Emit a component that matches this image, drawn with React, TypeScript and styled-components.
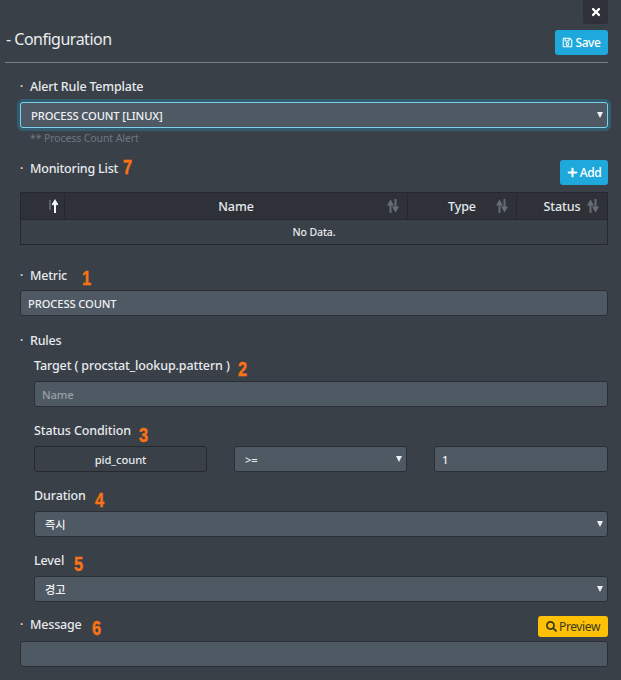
import React from "react";
import styled, { createGlobalStyle } from "styled-components";
import { FaRegSave, FaPlus, FaSearch, FaTimes } from "react-icons/fa";

const Global = createGlobalStyle`
  html, body { margin: 0; padding: 0; background: #3a4047; }
  body { font-family: "Noto Sans", "Noto Sans CJK KR", sans-serif; color: #e6eaee; }
  * { box-sizing: border-box; }
`;

const Page = styled.div`
  width: 621px;
  height: 680px;
  overflow: hidden;
  padding: 0 13px 0 5px;
  display: flex;
  flex-direction: column;
`;
const CloseRow = styled.div`
  display: flex;
  justify-content: flex-end;
  height: 24px;
`;
const CloseButton = styled.button`
  width: 25px;
  height: 24px;
  border: 0;
  padding: 0;
  border-radius: 0 0 3px 3px;
  background: #2e3238;
  color: #fff;
  font-size: 12px;
  display: flex;
  align-items: center;
  justify-content: center;
`;
const TitleRow = styled.div`
  display: flex;
  justify-content: space-between;
  align-items: flex-start;
  height: 39px;
  padding-top: 6px;
  padding-left: 1px;
  border-bottom: 1px solid #7a8088;
`;
const Title = styled.h1`
  margin: 0;
  font-size: 16px;
  font-weight: 400;
  line-height: 19px;
  letter-spacing: -0.5px;
  color: #e9edf0;
`;
const ActionButton = styled.button<{ $kind?: "info" | "warn" }>`
  border: 0;
  border-radius: 3px;
  height: ${(p) => (p.$kind === "warn" ? "21px" : "25px")};
  width: ${(p) => (p.$kind === "warn" ? "70px" : p.$kind === "info" ? "53px" : "48px")};
  padding: 0;
  background: ${(p) => (p.$kind === "warn" ? "#ffc107" : "#1fa8dc")};
  color: ${(p) => (p.$kind === "warn" ? "#3a3a1c" : "#fff")};
  font-family: inherit;
  font-size: 12px;
  font-weight: ${(p) => (p.$kind === "warn" ? 400 : 500)};
  letter-spacing: -0.4px;
  display: flex;
  align-items: center;
  justify-content: center;
  gap: 2px;
  svg { font-size: 11px; }
`;
const Body = styled.div`
  padding-left: 15px;
  display: flex;
  flex-direction: column;
`;
const Label = styled.div<{ $top: number; $sub?: boolean }>`
  margin-top: ${(p) => p.$top}px;
  margin-left: ${(p) => (p.$sub ? 14 : 0)}px;
  height: 16px;
  display: flex;
  align-items: center;
  font-size: 12.5px;
  font-weight: 500;
  letter-spacing: ${(p) => (p.$sub ? "-0.12px" : "-0.2px")};
  line-height: 16px;
  color: #e6eaee;
  white-space: nowrap;
`;
const Bullet = styled.span`
  width: 10px;
  font-size: 12px;
`;
const Num = styled.span<{ $gap: number; $dy: number }>`
  margin-left: ${(p) => p.$gap}px;
  color: #f97316;
  font-family: "Liberation Sans", sans-serif;
  font-size: 20px;
  font-weight: 700;
  letter-spacing: 0;
  -webkit-text-stroke: 0.4px #f97316;
  display: inline-block;
  transform: translateY(${(p) => p.$dy}px) scaleX(0.82);
  transform-origin: left center;
`;
const fieldCss = `
  display: block;
  height: 26px;
  width: 100%;
  border: 1px solid #2a2d33;
  border-radius: 3px;
  background: #4f5963;
  color: #eef1f3;
  font-family: inherit;
  font-size: 11.2px;
  font-weight: 500;
  letter-spacing: -0.12px;
  outline: none;
`;
const Input = styled.input<{ $top: number }>`
  ${fieldCss}
  margin-top: ${(p) => p.$top}px;
  padding: 0 7px;
  &::placeholder { color: #98a0a8; opacity: 1; }
`;
const SelectWrap = styled.div<{ $sub?: boolean; $top?: number }>`
  position: relative;
  margin-top: ${(p) => p.$top ?? 0}px;
  margin-left: ${(p) => (p.$sub ? 14 : 0)}px;
`;
const Select = styled.select<{ $focus?: boolean }>`
  ${fieldCss}
  appearance: none;
  padding: 0 10px;
  ${(p) => p.$focus && `
    border-color: #7fd0ea;
    box-shadow: 0 0 0 3px rgba(31, 168, 220, 0.28);
  `}
`;
const Arrow = styled.span`
  position: absolute;
  right: 5px;
  top: 10px;
  width: 0;
  height: 0;
  border-left: 3px solid transparent;
  border-right: 3px solid transparent;
  border-top: 6px solid #eef1f3;
`;
const Hint = styled.div`
  margin-top: 3px;
  margin-left: 10px;
  height: 15px;
  font-size: 10.5px;
  line-height: 15px;
  letter-spacing: -0.1px;
  color: #6d7680;
`;
const ListHead = styled.div`
  margin-top: 14px;
  height: 25px;
  display: flex;
  align-items: flex-start;
  justify-content: space-between;
`;
const Table = styled.div`
  margin-top: 7px;
  border: 1px solid #25282d;
  display: flex;
  flex-direction: column;
`;
const HeadRow = styled.div`
  display: grid;
  grid-template-columns: 44px 343px 109px 1fr;
  height: 27px;
  background: #2e3238;
  border-bottom: 1px solid #25282d;
`;
const HeadCell = styled.div<{ $last?: boolean }>`
  position: relative;
  display: flex;
  align-items: center;
  justify-content: center;
  font-size: 12.5px;
  font-weight: 500;
  letter-spacing: -0.1px;
  color: #e4e9ee;
  border-right: ${(p) => (p.$last ? "0" : "1px solid #25282d")};
`;
const SortSlot = styled.span<{ $right?: number }>`
  position: absolute;
  right: ${(p) => p.$right ?? 8}px;
  top: 6px;
  line-height: 0;
`;
const EmptyRow = styled.div`
  height: 24px;
  display: flex;
  align-items: center;
  justify-content: center;
  font-size: 10.5px;
  font-weight: 500;
  letter-spacing: -0.1px;
  color: #e6eaee;
`;
const CondRow = styled.div`
  margin: 7px 0 0 14px;
  display: grid;
  grid-template-columns: 173px 173px 174px;
  column-gap: 27px;
`;
const ReadOnlyCell = styled.div`
  height: 26px;
  border: 1px solid #25282d;
  border-radius: 3px;
  background: transparent;
  color: #e6eaee;
  font-size: 11.2px;
  font-weight: 500;
  letter-spacing: -0.1px;
  display: flex;
  align-items: center;
  justify-content: center;
`;
const SubField = styled.div<{ $top: number }>`
  margin: ${(p) => p.$top}px 0 0 14px;
`;
const MessageHead = styled.div`
  margin-top: 14px;
  height: 21px;
  display: flex;
  align-items: flex-start;
  justify-content: space-between;
`;

const SortIcon = () => (
  <svg width="12" height="14" viewBox="0 0 12 14" aria-hidden="true">
    <path d="M3.5 14V4M1 6.5l2.5-4 2.5 4" fill="none" stroke="#666c73" strokeWidth="2" />
    <path d="M8.5 0v10M6 7.5l2.5 4 2.5-4" fill="none" stroke="#666c73" strokeWidth="2" />
  </svg>
);
const SortUp = () => (
  <svg width="12" height="14" viewBox="0 0 12 14" aria-hidden="true">
    <path d="M3 1v10" fill="none" stroke="#5b6168" strokeWidth="2" />
    <path d="M8 14V3M5.5 6l2.5-4 2.5 4" fill="none" stroke="#f2f6fa" strokeWidth="2" />
  </svg>
);

const Dropdown = ({ value, sub, top, focus }: { value: string; sub?: boolean; top?: number; focus?: boolean }) => (
  <SelectWrap $sub={sub} $top={top}>
    <Select $focus={focus} defaultValue={value}>
      <option value={value}>{value}</option>
    </Select>
    <Arrow />
  </SelectWrap>
);

export default function App() {
  return (
    <Page>
      <Global />
      <CloseRow>
        <CloseButton aria-label="Close"><FaTimes /></CloseButton>
      </CloseRow>
      <TitleRow>
        <Title>- Configuration</Title>
        <ActionButton $kind="info"><FaRegSave />Save</ActionButton>
      </TitleRow>
      <Body>
        <Label $top={16}><Bullet>·</Bullet>Alert Rule Template</Label>
        <Dropdown value="PROCESS COUNT [LINUX]" top={7} focus />
        <Hint>** Process Count Alert</Hint>
        <ListHead>
          <Label $top={1}><Bullet>·</Bullet>Monitoring List<Num $gap={5} $dy={-2}>7</Num></Label>
          <ActionButton><FaPlus />Add</ActionButton>
        </ListHead>
        <Table>
          <HeadRow>
            <HeadCell><SortSlot $right={5}><SortUp /></SortSlot></HeadCell>
            <HeadCell>Name<SortSlot><SortIcon /></SortSlot></HeadCell>
            <HeadCell>Type<SortSlot><SortIcon /></SortSlot></HeadCell>
            <HeadCell $last>Status<SortSlot><SortIcon /></SortSlot></HeadCell>
          </HeadRow>
          <EmptyRow>No Data.</EmptyRow>
        </Table>
        <Label $top={23}><Bullet>·</Bullet>Metric<Num $gap={15} $dy={2}>1</Num></Label>
        <Input $top={6} defaultValue="PROCESS COUNT" readOnly />
        <Label $top={17}><Bullet>·</Bullet>Rules</Label>
        <Label $top={9} $sub>Target ( procstat_lookup.pattern )<Num $gap={8} $dy={3}>2</Num></Label>
        <SubField $top={7}><Input $top={0} placeholder="Name" /></SubField>
        <Label $top={16} $sub>Status Condition<Num $gap={8} $dy={4}>3</Num></Label>
        <CondRow>
          <ReadOnlyCell>pid_count</ReadOnlyCell>
          <Dropdown value=">=" />
          <Input $top={0} defaultValue="1" />
        </CondRow>
        <Label $top={16} $sub>Duration<Num $gap={9} $dy={4}>4</Num></Label>
        <Dropdown value="즉시" sub top={7} />
        <Label $top={16} $sub>Level<Num $gap={10} $dy={3}>5</Num></Label>
        <Dropdown value="경고" sub top={7} />
        <MessageHead>
          <Label $top={1}><Bullet>·</Bullet>Message<Num $gap={11} $dy={3}>6</Num></Label>
          <ActionButton $kind="warn"><FaSearch />Preview</ActionButton>
        </MessageHead>
        <Input $top={4} readOnly />
      </Body>
    </Page>
  );
}
